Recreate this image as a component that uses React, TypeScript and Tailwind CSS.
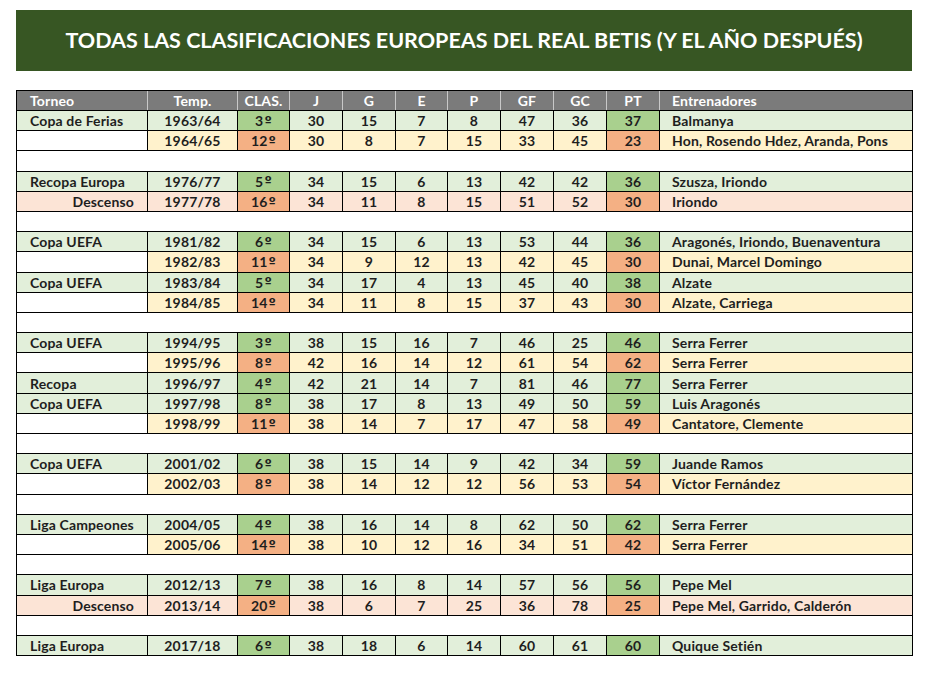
type Kind = "g" | "y" | "p" | "blank";

interface Row {
  kind: Kind;
  torneo?: string;
  temp?: string;
  clas?: number;
  stats?: number[];
  pt?: number;
  coach?: string;
}

const rows: Row[] = [
  { kind: "g", torneo: "Copa de Ferias", temp: "1963/64", clas: 3, stats: [30, 15, 7, 8, 47, 36], pt: 37, coach: "Balmanya" },
  { kind: "y", temp: "1964/65", clas: 12, stats: [30, 8, 7, 15, 33, 45], pt: 23, coach: "Hon, Rosendo Hdez, Aranda, Pons" },
  { kind: "blank" },
  { kind: "g", torneo: "Recopa Europa", temp: "1976/77", clas: 5, stats: [34, 15, 6, 13, 42, 42], pt: 36, coach: "Szusza, Iriondo" },
  { kind: "p", torneo: "Descenso", temp: "1977/78", clas: 16, stats: [34, 11, 8, 15, 51, 52], pt: 30, coach: "Iriondo" },
  { kind: "blank" },
  { kind: "g", torneo: "Copa UEFA", temp: "1981/82", clas: 6, stats: [34, 15, 6, 13, 53, 44], pt: 36, coach: "Aragonés, Iriondo, Buenaventura" },
  { kind: "y", temp: "1982/83", clas: 11, stats: [34, 9, 12, 13, 42, 45], pt: 30, coach: "Dunai, Marcel Domingo" },
  { kind: "g", torneo: "Copa UEFA", temp: "1983/84", clas: 5, stats: [34, 17, 4, 13, 45, 40], pt: 38, coach: "Alzate" },
  { kind: "y", temp: "1984/85", clas: 14, stats: [34, 11, 8, 15, 37, 43], pt: 30, coach: "Alzate, Carriega" },
  { kind: "blank" },
  { kind: "g", torneo: "Copa UEFA", temp: "1994/95", clas: 3, stats: [38, 15, 16, 7, 46, 25], pt: 46, coach: "Serra Ferrer" },
  { kind: "y", temp: "1995/96", clas: 8, stats: [42, 16, 14, 12, 61, 54], pt: 62, coach: "Serra Ferrer" },
  { kind: "g", torneo: "Recopa", temp: "1996/97", clas: 4, stats: [42, 21, 14, 7, 81, 46], pt: 77, coach: "Serra Ferrer" },
  { kind: "g", torneo: "Copa UEFA", temp: "1997/98", clas: 8, stats: [38, 17, 8, 13, 49, 50], pt: 59, coach: "Luis Aragonés" },
  { kind: "y", temp: "1998/99", clas: 11, stats: [38, 14, 7, 17, 47, 58], pt: 49, coach: "Cantatore, Clemente" },
  { kind: "blank" },
  { kind: "g", torneo: "Copa UEFA", temp: "2001/02", clas: 6, stats: [38, 15, 14, 9, 42, 34], pt: 59, coach: "Juande Ramos" },
  { kind: "y", temp: "2002/03", clas: 8, stats: [38, 14, 12, 12, 56, 53], pt: 54, coach: "Víctor Fernández" },
  { kind: "blank" },
  { kind: "g", torneo: "Liga Campeones", temp: "2004/05", clas: 4, stats: [38, 16, 14, 8, 62, 50], pt: 62, coach: "Serra Ferrer" },
  { kind: "y", temp: "2005/06", clas: 14, stats: [38, 10, 12, 16, 34, 51], pt: 42, coach: "Serra Ferrer" },
  { kind: "blank" },
  { kind: "g", torneo: "Liga Europa", temp: "2012/13", clas: 7, stats: [38, 16, 8, 14, 57, 56], pt: 56, coach: "Pepe Mel" },
  { kind: "p", torneo: "Descenso", temp: "2013/14", clas: 20, stats: [38, 6, 7, 25, 36, 78], pt: 25, coach: "Pepe Mel, Garrido, Calderón" },
  { kind: "blank" },
  { kind: "g", torneo: "Liga Europa", temp: "2017/18", clas: 6, stats: [38, 18, 6, 14, 60, 61], pt: 60, coach: "Quique Setién" },
];

// anchos de columna medidos sobre la captura
const W = {
  torneo: "w-[131px]",
  temp: "w-[90px]",
  clas: "w-[52px]",
  stat: ["w-[53px]", "w-[53px]", "w-[52px]", "w-[53px]", "w-[53px]", "w-[53px]"],
  pt: "w-[53px]",
};

const rowBg: Record<Exclude<Kind, "blank">, string> = {
  g: "bg-[#e2efda]",
  y: "bg-[#fff2cc]",
  p: "bg-[#fce4d6]",
};

const strong: Record<Exclude<Kind, "blank">, string> = {
  g: "bg-[#a9d08e]",
  y: "bg-[#f4b084]",
  p: "bg-[#f4b084]",
};

function Cell({ className, children }: { className?: string; children?: React.ReactNode }) {
  return (
    <div className={`shrink-0 h-full flex items-center justify-center border-r border-black ${className ?? ""}`}>
      {children}
    </div>
  );
}

function DataRow({ row }: { row: Row }) {
  if (row.kind === "blank") {
    return <div className="h-[20.2px] border-b border-black" />;
  }
  const bg = rowBg[row.kind];
  const torneoBg = row.kind === "y" ? "bg-white" : bg;
  const torneoAlign = row.kind === "p" ? "justify-end pr-[13px]" : "justify-start pl-[13px]";
  return (
    <div className="h-[20.2px] flex border-b border-black">
      <Cell className={`${W.torneo} ${torneoBg} ${torneoAlign}`}>{row.torneo}</Cell>
      <Cell className={`${W.temp} ${bg}`}>{row.temp}</Cell>
      <Cell className={`${W.clas} ${strong[row.kind]}`}>
        {row.clas}
        {/* el º de Lato sale sin subrayado; el de DejaVu lo trae */}
        <span className="ml-[1px] text-[13px]" style={{ fontFamily: "'DejaVu Sans', sans-serif" }}>º</span>
      </Cell>
      {row.stats!.map((s, i) => (
        <Cell key={i} className={`${W.stat[i]} ${bg}`}>{s}</Cell>
      ))}
      <Cell className={`${W.pt} ${strong[row.kind]}`}>{row.pt}</Cell>
      <div className={`flex-1 h-full flex items-center pl-[12px] ${bg}`}>{row.coach}</div>
    </div>
  );
}

const headers = ["J", "G", "E", "P", "GF", "GC"];

export default function App() {
  return (
    <div
      className="min-h-screen bg-white pt-[10px] pl-[16px]"
      style={{ fontFamily: "Lato, 'Noto Sans', sans-serif" }}
    >
      <div className="w-[896px] h-[61px] bg-[#375623] flex items-center justify-center">
        <h1 className="text-white font-bold text-[21.5px]">
          TODAS LAS CLASIFICACIONES EUROPEAS DEL REAL BETIS (Y EL AÑO DESPUÉS)
        </h1>
      </div>

      <div className="mt-[19px] w-[897px] border-x border-black text-[14px] tracking-[0.15px] font-bold text-[#1e1e1e]">
        <div className="h-[21px] flex bg-[#7b7b7b] text-white border-y border-black">
          <div className={`${W.torneo} shrink-0 flex items-center pl-[13px] border-r border-[#c8c8c8]`}>Torneo</div>
          <div className={`${W.temp} shrink-0 flex items-center justify-center border-r border-[#c8c8c8]`}>Temp.</div>
          <div className={`${W.clas} shrink-0 flex items-center justify-center border-r border-[#c8c8c8]`}>CLAS.</div>
          {headers.map((h, i) => (
            <div key={h} className={`${W.stat[i]} shrink-0 flex items-center justify-center border-r border-[#c8c8c8]`}>
              {h}
            </div>
          ))}
          <div className={`${W.pt} shrink-0 flex items-center justify-center border-r border-[#c8c8c8]`}>PT</div>
          <div className="flex-1 flex items-center pl-[12px]">Entrenadores</div>
        </div>
        {rows.map((r, i) => (
          <DataRow key={i} row={r} />
        ))}
      </div>
    </div>
  );
}
